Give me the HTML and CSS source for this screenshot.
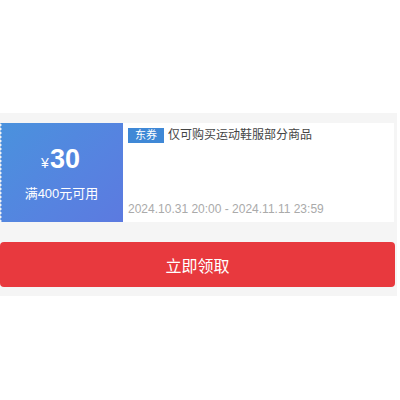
FILE: index.html
```html
<!DOCTYPE html>
<html lang="zh-CN">
<head>
    <meta charset="UTF-8" />
    <meta name="viewport" content="width=device-width, initial-scale=1.0" />
    <title>领取优惠券</title>
    <link rel="stylesheet" href="styles.css">
</head>
<body>
    <div class="top-space"></div>

    <div class="coupon-panel">
        <!-- Coupon card -->
        <div class="coupon">
            <div class="coupon-value">
                <div class="amount"><span class="yen">¥</span>30</div>
                <div class="condition">满400元可用</div>
            </div>
            <div class="coupon-info">
                <div class="title-row">
                    <span class="tag">东券</span>
                    <span class="title">仅可购买运动鞋服部分商品</span>
                </div>
                <div class="period">2024.10.31 20:00 - 2024.11.11 23:59</div>
            </div>
        </div>

        <!-- Get button -->
        <button class="get-btn">立即领取</button>
    </div>
</body>
</html>
```

FILE: styles.css
```css
body {
    margin: 0;
    background-color: #ffffff;
    font-family: "Liberation Sans", "Noto Sans CJK SC", sans-serif;
}

.top-space {
    height: 113px;
}

.coupon-panel {
    width: 395px;
    background-color: #f5f5f5;
    padding: 10px 2px 9px 0;
    display: flex;
    flex-direction: column;
    gap: 20px;
}

/* Coupon card */
.coupon {
    display: flex;
    height: 99px;
    margin-right: 1px;
    background-color: #ffffff;
}

.coupon-value {
    position: relative;
    width: 123px;
    background: linear-gradient(135deg, #4a92dd 0%, #5683e0 60%, #5c7ae0 100%);
    color: #ffffff;
    display: flex;
    flex-direction: column;
    align-items: center;
    justify-content: center;
    gap: 9px;
    padding-top: 2px;
    box-sizing: border-box;
}

/* perforated left edge */
.coupon-value::before {
    content: "";
    position: absolute;
    left: 0;
    top: 0;
    bottom: 0;
    width: 3px;
    background: radial-gradient(circle at 0 50%, #f5f5f5 1.3px, transparent 1.8px);
    background-size: 3px 4px;
}

.amount {
    font-size: 27px;
    font-weight: bold;
    line-height: 28px;
    padding-right: 2px;
}

.yen {
    font-size: 14px;
    font-weight: normal;
    margin-right: 1px;
}

.condition {
    font-size: 13px;
    line-height: 16px;
}

.coupon-info {
    flex: 1;
    padding: 5px 0 6px 5px;
    display: flex;
    flex-direction: column;
    justify-content: space-between;
}

.title-row {
    display: flex;
    align-items: center;
    gap: 4px;
}

.tag {
    background-color: #3f88d6;
    color: #ffffff;
    font-size: 11px;
    line-height: 15px;
    width: 36px;
    text-align: center;
}

.title {
    font-size: 12px;
    color: #444444;
    line-height: 15px;
}

.period {
    font-size: 12px;
    color: #aaaaaa;
    line-height: 14px;
}

/* Button */
.get-btn {
    height: 45px;
    border: none;
    border-radius: 4px;
    background-color: #e8393e;
    color: #ffffff;
    font-family: "Liberation Sans", "Noto Sans CJK SC", sans-serif;
    font-size: 16px;
    cursor: pointer;
}
```
